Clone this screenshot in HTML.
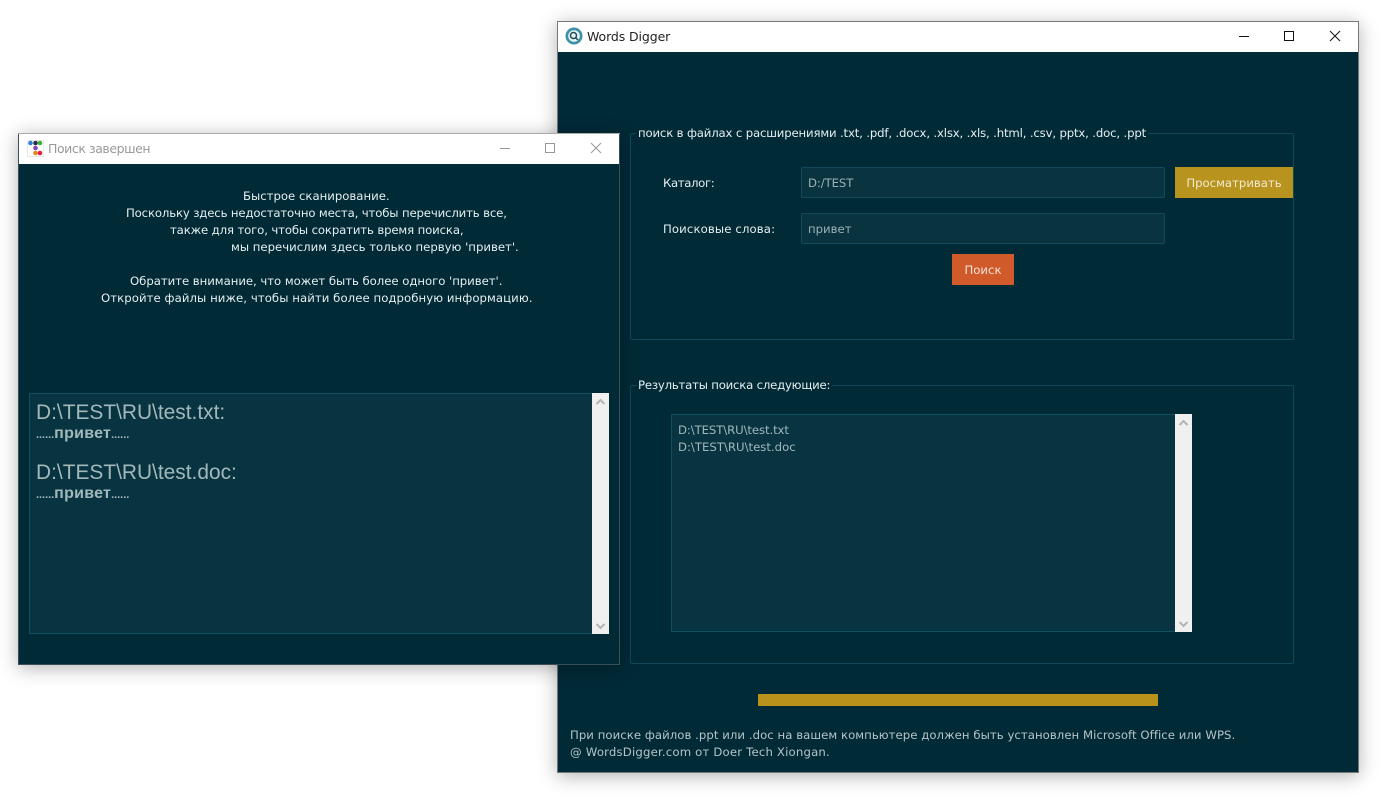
<!DOCTYPE html>
<html><head><meta charset="utf-8"><style>
*{box-sizing:border-box}
html,body{margin:0;padding:0;width:1382px;height:812px;background:#fff;overflow:hidden}
body{position:relative;font-family:"DejaVu Sans","Liberation Sans",sans-serif;font-size:12px}
.a{position:absolute}
.t{position:absolute;white-space:nowrap;line-height:17px;height:17px;color:#e6eeee;font-size:11.7px}
.win{position:absolute;background:#012a37}
.g{position:absolute;border:1px solid #0f4859;border-radius:2px}
.in{position:absolute;background:#08333f;border:1px solid #114a5a;border-radius:2px}
.sb{position:absolute;background:#f0f0f0}
.list{position:absolute;background:#083442;border:1px solid #11505f}
.m{font-family:"Liberation Sans",sans-serif;color:#a3b8ba}
.big{height:23px;line-height:23px;font-size:20.9px}
.sm{font-size:11px;font-weight:bold;letter-spacing:-.03px}
.sm b{font-size:16px;letter-spacing:.25px}
</style></head><body>

<!-- right window -->
<div class="win" style="left:557px;top:21px;width:802px;height:752px;border:1px solid #777;box-shadow:0 3px 18px rgba(0,0,0,.3)"></div>
<div class="a" style="left:558px;top:22px;width:800px;height:30px;background:#fff"></div>
<svg class="a" style="left:565px;top:27px" width="18" height="18" viewBox="0 0 18 18"><circle cx="9" cy="9" r="8.500" fill="#3a93a8"/><circle cx="9" cy="9" r="5.800" fill="#e8f2f4"/><circle cx="8.500" cy="8.500" r="3" fill="none" stroke="#1d4a58" stroke-width="1.500"/><path d="M10.500 10.500L13 13" stroke="#1d4a58" stroke-width="1.500"/></svg>
<div class="t" style="left:587px;top:28px;color:#222;font-size:12.500px;letter-spacing:-.1px">Words Digger</div>
<svg class="a" style="left:1230px;top:22px" width="120" height="30" fill="none" stroke="#111" stroke-width="1"><path d="M9 14.500H19"/><rect x="54.500" y="9.500" width="9" height="9"/><path d="M100 9L110 19M110 9L100 19"/></svg>

<div class="g" style="left:630px;top:133px;width:664px;height:207px"></div>
<div class="a" style="left:636px;top:130px;width:512px;height:6px;background:#012a37"></div>
<div class="t" style="left:638px;top:125px;letter-spacing:-.155px">поиск в файлах с расширениями .txt, .pdf, .docx, .xlsx, .xls, .html, .csv, pptx, .doc, .ppt</div>
<div class="t" style="left:663px;top:175px;letter-spacing:-.35px">Каталог:</div>
<div class="t" style="left:663px;top:221px;letter-spacing:.12px">Поисковые слова:</div>
<div class="in" style="left:801px;top:167px;width:364px;height:31px"></div>
<div class="in" style="left:801px;top:213px;width:364px;height:31px"></div>
<div class="t" style="left:808px;top:175px;color:#9db3b5;letter-spacing:-.1px">D:/TEST</div>
<div class="t" style="left:808px;top:221px;color:#9db3b5">привет</div>
<div class="a" style="left:1175px;top:167px;width:118px;height:31px;background:#b8931e"></div>
<div class="t" style="left:1175px;top:175px;width:118px;text-align:center;color:#f2ead2">Просматривать</div>
<div class="a" style="left:952px;top:254px;width:62px;height:31px;background:#d15a2b"></div>
<div class="t" style="left:952px;top:262px;width:62px;text-align:center;color:#f6e4da">Поиск</div>

<div class="g" style="left:630px;top:385px;width:664px;height:279px"></div>
<div class="a" style="left:636px;top:382px;width:196px;height:6px;background:#012a37"></div>
<div class="t" style="left:638px;top:377px;letter-spacing:-.2px">Результаты поиска следующие:</div>
<div class="list" style="left:671px;top:414px;width:505px;height:218px"></div>
<div class="sb" style="left:1175px;top:414px;width:17px;height:218px"></div>
<svg class="a" style="left:1175px;top:414px" width="17" height="218" fill="none" stroke="#b4b4b4" stroke-width="2"><path d="M4.500 11L8.500 7L12.500 11"/><path d="M4.500 208L8.500 212L12.500 208"/></svg>
<div class="t" style="left:678px;top:422px;color:#a3b8ba;letter-spacing:-.1px">D:\TEST\RU\test.txt</div>
<div class="t" style="left:678px;top:439px;color:#a3b8ba">D:\TEST\RU\test.doc</div>

<div class="a" style="left:758px;top:694px;width:400px;height:12px;background:#b8921a"></div>
<div class="t" style="left:570px;top:727px;color:#b5c4c6;letter-spacing:.05px">При поиске файлов .ppt или .doc на вашем компьютере должен быть установлен Microsoft Office или WPS.</div>
<div class="t" style="left:570px;top:744px;color:#b5c4c6;letter-spacing:.18px">@ WordsDigger.com от Doer Tech Xiongan.</div>

<!-- left window -->
<div class="win" style="left:18px;top:133px;width:602px;height:532px;border:1px solid #3a4f56;box-shadow:0 3px 18px rgba(0,0,0,.3)"></div>
<div class="a" style="left:18px;top:133px;width:602px;height:1px;background:#aaa"></div>
<div class="a" style="left:19px;top:134px;width:600px;height:30px;background:#fff"></div>
<svg class="a" style="left:27px;top:140px" width="17" height="17" viewBox="0 0 17 17"><rect x="0.500" y="0.500" width="16" height="16" fill="none" stroke="#e8e8e8"/><circle cx="3.500" cy="3" r="2.300" fill="#2d7fd6"/><circle cx="8.500" cy="3" r="2.300" fill="#2a3344"/><circle cx="13" cy="3" r="2.300" fill="#3fae3f"/><circle cx="8.500" cy="8" r="2.300" fill="#8a45b0"/><circle cx="8.500" cy="13" r="2.300" fill="#ee8122"/><circle cx="13" cy="13" r="2.300" fill="#e0213f"/></svg>
<div class="t" style="left:48px;top:140px;color:#999;font-size:12.500px;letter-spacing:-.43px">Поиск завершен</div>
<svg class="a" style="left:490px;top:134px" width="120" height="30" fill="none" stroke="#999" stroke-width="1"><path d="M10 14.500H20"/><rect x="55.500" y="9.500" width="9" height="9"/><path d="M101 9L111 19M111 9L101 19"/></svg>

<div class="t" style="left:243px;top:188px">Быстрое сканирование.</div>
<div class="t" style="left:126px;top:205px;letter-spacing:-.14px">Поскольку здесь недостаточно места, чтобы перечислить все,</div>
<div class="t" style="left:170px;top:222px;letter-spacing:-.13px">также для того, чтобы сократить время поиска,</div>
<div class="t" style="left:231px;top:239px">мы перечислим здесь только первую 'привет'.</div>
<div class="t" style="left:130px;top:273px;letter-spacing:-.035px">Обратите внимание, что может быть более одного 'привет'.</div>
<div class="t" style="left:101px;top:290px;letter-spacing:.065px">Откройте файлы ниже, чтобы найти более подробную информацию.</div>

<div class="list" style="left:29px;top:393px;width:564px;height:241px"></div>
<div class="sb" style="left:592px;top:393px;width:17px;height:241px"></div>
<svg class="a" style="left:592px;top:393px" width="17" height="241" fill="none" stroke="#b4b4b4" stroke-width="2"><path d="M4.500 11L8.500 7L12.500 11"/><path d="M4.500 231L8.500 235L12.500 231"/></svg>
<div class="t m big" style="left:36px;top:401px">D:\TEST\RU\test.txt:</div>
<div class="t m sm" style="left:36px;top:425px">......<b>привет</b>......</div>
<div class="t m big" style="left:36px;top:461px">D:\TEST\RU\test.doc:</div>
<div class="t m sm" style="left:36px;top:485px">......<b>привет</b>......</div>
</body></html>
